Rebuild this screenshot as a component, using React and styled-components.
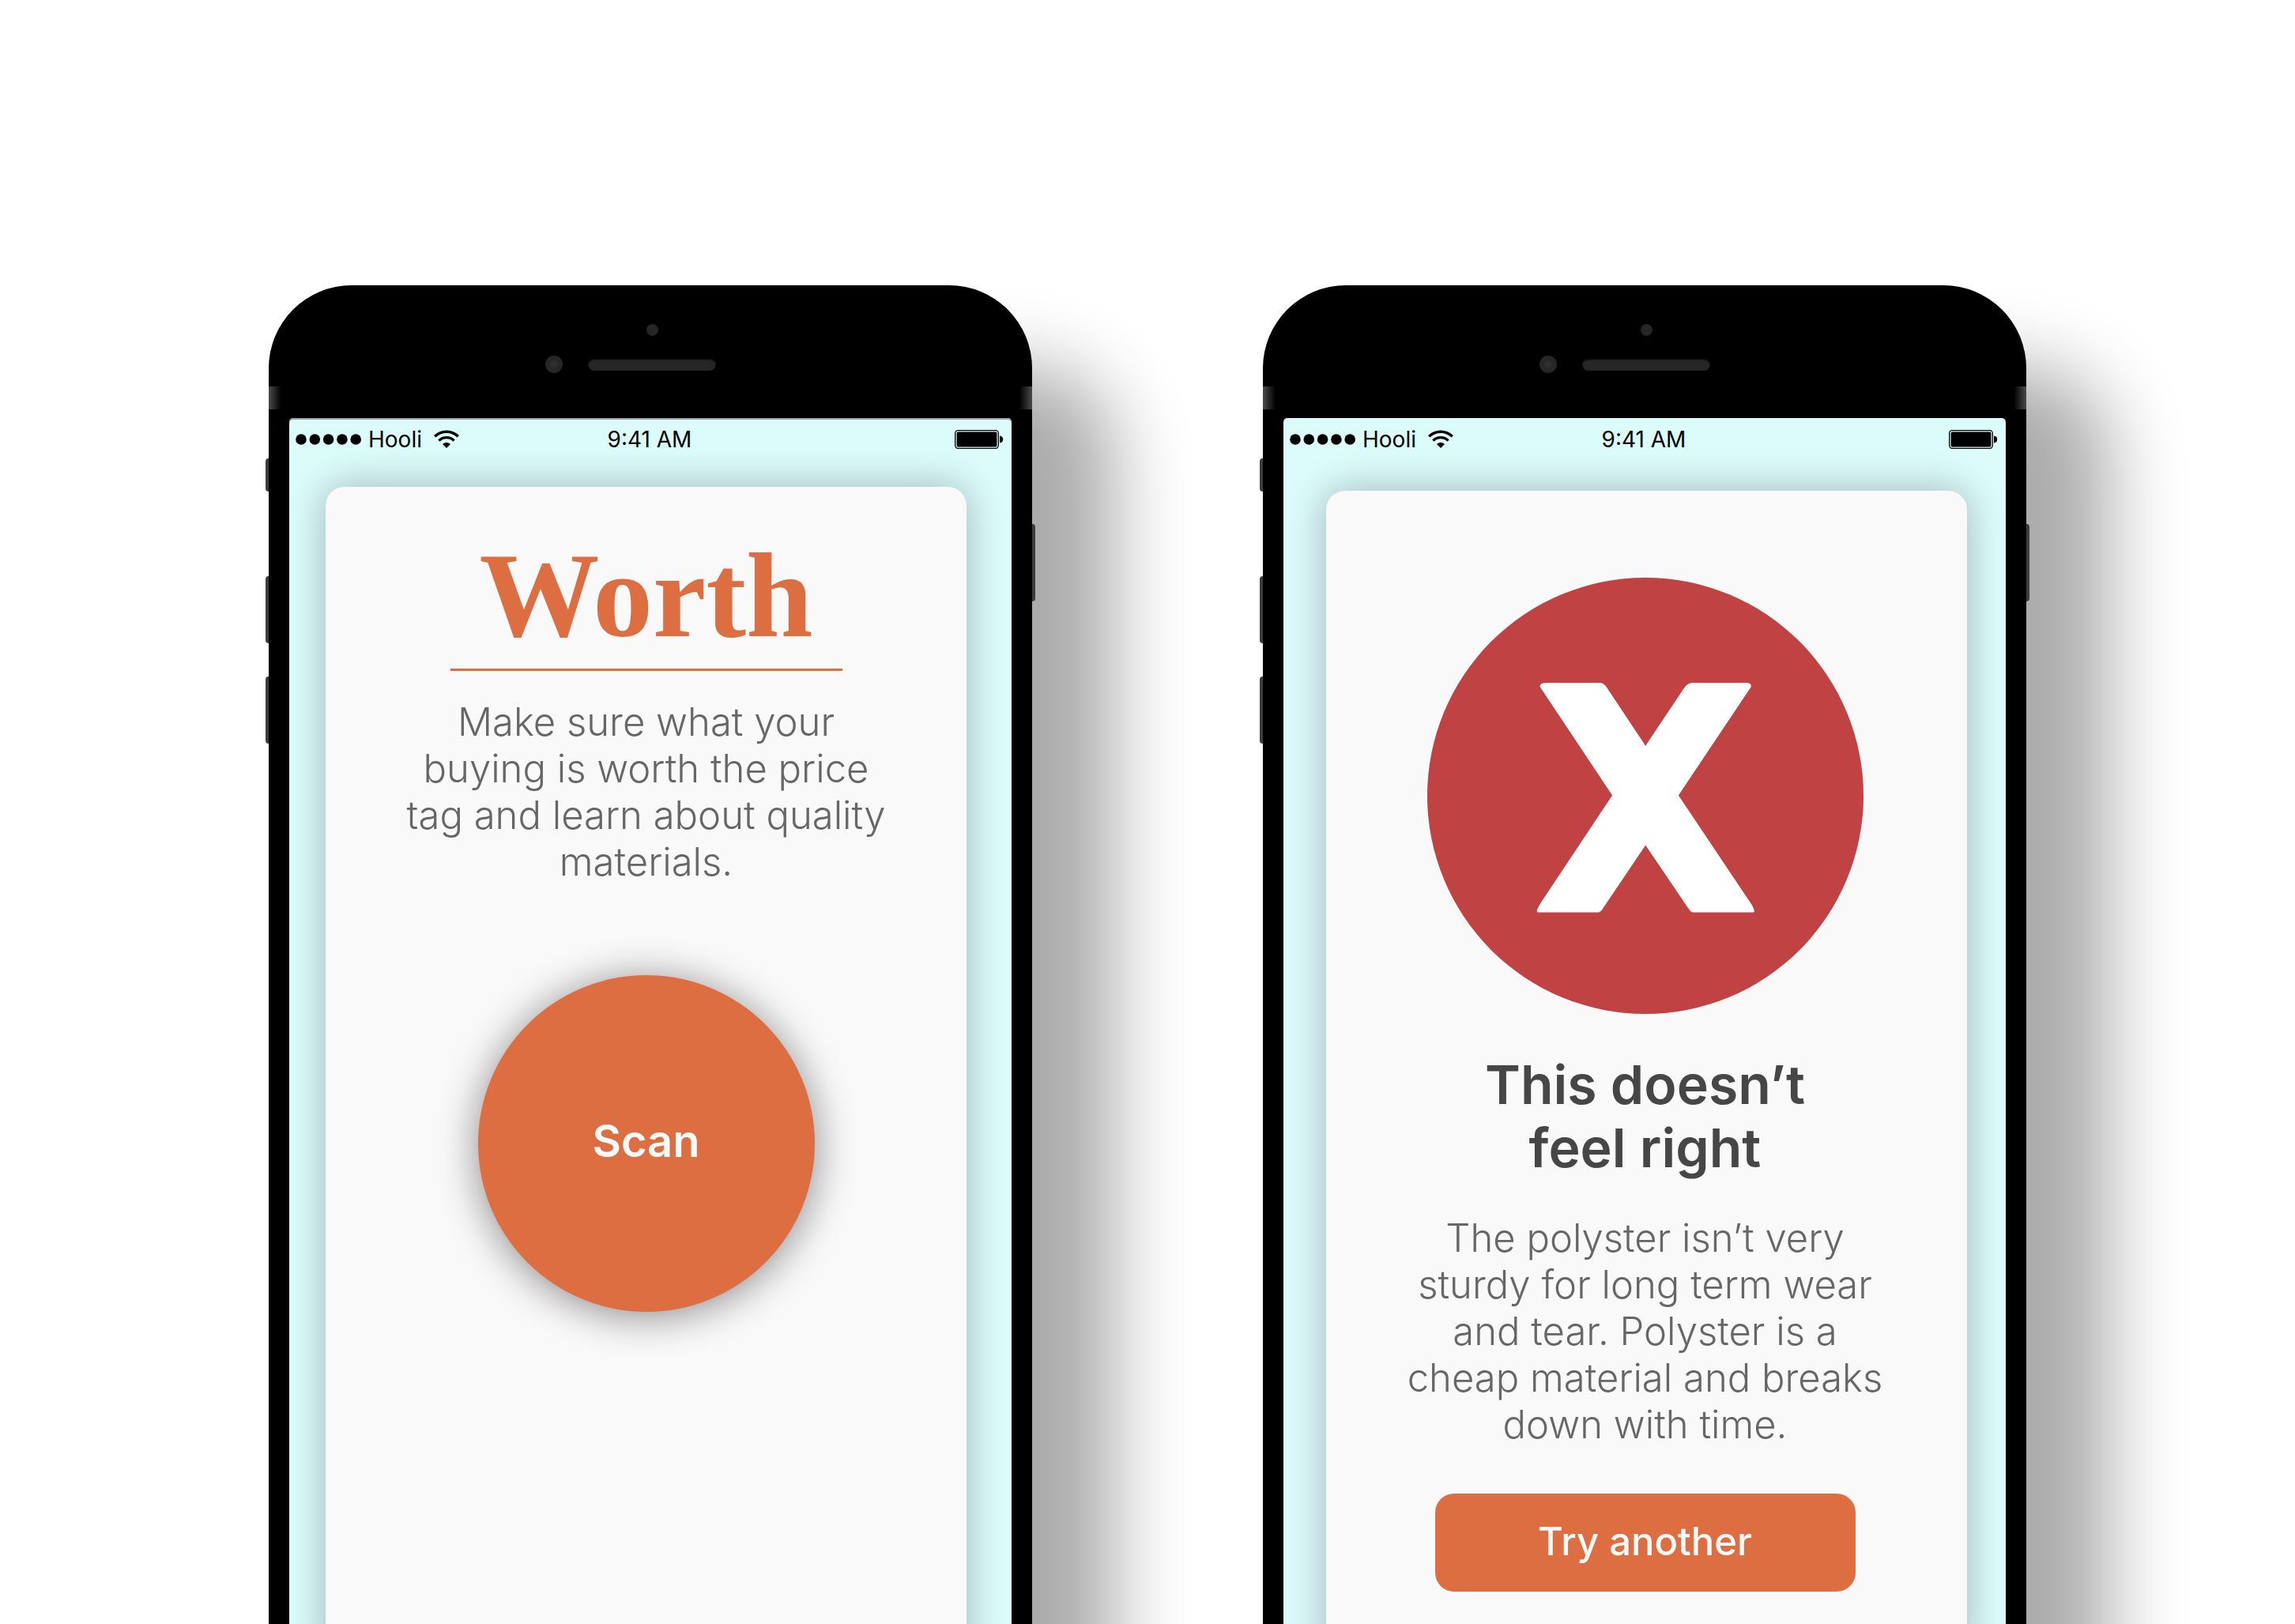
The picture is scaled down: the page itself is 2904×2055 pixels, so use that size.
import React from "react";
import styled, { createGlobalStyle, css } from "styled-components";

const color = {
  sky: "#dcfbfb",
  card: "#f9f9f9",
  accent: "#dc6e42",
  danger: "#c14242",
  heading: "#464646",
  body: "#666666",
  key: "#3c3c3c",
  lens: "#262626",
};

const Global = createGlobalStyle`
  *, *::before, *::after { box-sizing: border-box; }
  body {
    margin: 0;
    background: #fff;
    font-family: Inter, "Liberation Sans", sans-serif;
  }
  h1, h2, p { margin: 0; }
  button { border: 0; padding: 0; font-family: inherit; cursor: pointer; }
`;

const Stage = styled.main`
  display: flex;
  justify-content: center;
  align-items: flex-start;
  gap: 292px;
  height: 100vh;
  padding-top: 361px;
  overflow: hidden;
`;

const Phone = styled.section`
  position: relative;
  display: flex;
  flex-direction: column;
  flex: 0 1 966px;
  min-height: 1960px;
  padding: 0 26px 168px;
  border-radius: 105px;
  background: #000;
  box-shadow: 104px 104px 96px rgba(0, 0, 0, 0.33);
`;

const SideKey = styled.span`
  position: absolute;
  top: ${(p) => p.$top}px;
  width: 4px;
  height: ${(p) => p.$height}px;
  background: ${color.key};
  ${(p) =>
    p.$side === "left"
      ? css`
          right: 100%;
          border-radius: 4px 0 0 4px;
        `
      : css`
          left: 100%;
          border-radius: 0 4px 4px 0;
        `}
`;

const AntennaBand = styled.span`
  position: absolute;
  top: 128px;
  ${(p) => p.$side}: 0;
  width: 16px;
  height: 29px;
  background: linear-gradient(to ${(p) => p.$side}, #000, #4c4a4b);
`;

const Forehead = styled.header`
  display: flex;
  flex-direction: column;
  align-items: center;
  gap: 25px;
  height: 168px;
  padding: 49px 0 0 4px;
`;

const Sensor = styled.span`
  width: 15px;
  height: 15px;
  border-radius: 50%;
  background: ${color.lens};
`;

const EarpieceRow = styled.div`
  display: grid;
  grid-template-columns: 1fr auto 1fr;
  align-items: center;
  gap: 32px;
  width: 100%;
`;

const Camera = styled.span`
  justify-self: end;
  width: 22px;
  height: 22px;
  border-radius: 50%;
  background: radial-gradient(circle, #343434 0, ${color.lens} 40%);
`;

const Speaker = styled.span`
  width: 162px;
  height: 16px;
  border-radius: 8px;
  background: ${color.lens};
  box-shadow: inset 0 2px 2px #000;
`;

const Screen = styled.div`
  display: flex;
  flex-direction: column;
  flex: 1;
  overflow: hidden;
  border-radius: 5px;
  background: ${color.sky};
  box-shadow: ${(p) => (p.$edge ? "inset 0 2px #9aa3a1" : "none")};
`;

const StatusBar = styled.div`
  display: grid;
  grid-template-columns: 1fr auto 1fr;
  align-items: center;
  height: 53px;
  padding: 0 10px 0 8px;
  font-size: 28px;
  line-height: 34px;
  color: #000;
`;

const Carrier = styled.div`
  display: flex;
  align-items: center;
`;

const SignalDots = styled.svg`
  width: 84px;
  height: 14px;
  margin-right: 8px;
`;

const WifiIcon = styled.svg`
  width: 32px;
  height: 24px;
  margin-left: 15px;
`;

const BatteryIcon = styled.svg`
  justify-self: end;
  width: 62px;
  height: 24px;
`;

const Card = styled.article`
  display: flex;
  flex-direction: column;
  align-items: center;
  flex: 1;
  margin: ${(p) => p.$margin};
  padding: ${(p) => p.$padding};
  border-radius: 24px;
  background: ${color.card};
  box-shadow: 0 0 50px rgba(0, 0, 0, 0.28);
  text-align: center;
`;

const Wordmark = styled.h1`
  font: bold 152px/152px "Liberation Serif", serif;
  color: ${color.accent};
`;

const Rule = styled.hr`
  width: 496px;
  height: 3px;
  margin: 16px 0 0;
  border: 0;
  background: ${color.accent};
`;

const Verdict = styled.h2`
  margin-top: 49px;
  font-size: 68px;
  font-weight: 600;
  line-height: 80px;
  white-space: pre-line;
  color: ${color.heading};
`;

const Copy = styled.p`
  margin-top: ${(p) => p.$gap}px;
  font-size: 49px;
  font-weight: 300;
  line-height: 59px;
  white-space: pre-line;
  color: ${color.body};
`;

const ScanButton = styled.button`
  width: 426px;
  height: 426px;
  margin-top: 114px;
  padding-bottom: 6px;
  border-radius: 50%;
  background: ${color.accent};
  box-shadow: 0 5px 50px rgba(20, 10, 15, 0.48);
  color: ${color.card};
  font-size: 56px;
  font-weight: 600;
`;

const RetryButton = styled.button`
  width: 532px;
  height: 124px;
  margin-top: 58px;
  padding-bottom: 4px;
  border-radius: 24px;
  background: ${color.accent};
  color: ${color.card};
  font-size: 49px;
  font-weight: 500;
`;

const VerdictIcon = styled.svg`
  width: 552px;
  height: 552px;
`;

function Status() {
  return (
    <StatusBar>
      <Carrier>
        <SignalDots viewBox="0 0 84 14" aria-hidden="true">
          {[7, 24.3, 41.6, 58.9, 76.2].map((x) => (
            <circle key={x} cx={x} cy="7" r="6.8" />
          ))}
        </SignalDots>
        <span>Hooli</span>
        <WifiIcon viewBox="0 0 32 24" aria-hidden="true">
          <path
            d="M1.2 8.3a21 21 0 0 1 29.6 0M6.4 13.6a13.6 13.6 0 0 1 19.2 0"
            fill="none"
            stroke="#000"
            strokeWidth="3.4"
          />
          <path d="M16 23l-5-5a7.2 7.2 0 0 1 10 0z" />
        </WifiIcon>
      </Carrier>
      <span>9:41 AM</span>
      <BatteryIcon viewBox="0 0 62 24" aria-hidden="true">
        <rect x="0.7" y="0.7" width="54.6" height="22.6" rx="3.5" fill="none" stroke="#000" strokeWidth="1.3" />
        <rect x="2.6" y="2.6" width="50.8" height="18.8" rx="1.5" />
        <path d="M57 7.5c3 .3 4.2 2 4.2 4.5s-1.2 4.2-4.2 4.5z" />
      </BatteryIcon>
    </StatusBar>
  );
}

function Device({ edge, children }) {
  return (
    <Phone>
      <SideKey $side="left" $top={219} $height={42} />
      <SideKey $side="left" $top={368} $height={85} />
      <SideKey $side="left" $top={495} $height={85} />
      <SideKey $side="right" $top={302} $height={98} />
      <AntennaBand $side="left" />
      <AntennaBand $side="right" />
      <Forehead>
        <Sensor />
        <EarpieceRow>
          <Camera />
          <Speaker />
        </EarpieceRow>
      </Forehead>
      <Screen $edge={edge}>
        <Status />
        {children}
      </Screen>
    </Phone>
  );
}

export default function App() {
  return (
    <>
      <Global />
      <Stage>
        <Device edge>
          <Card $margin="34px 57px 46px 46px" $padding="62px 0 0">
            <Wordmark>Worth</Wordmark>
            <Rule />
            <Copy $gap={35}>
              {"Make sure what your\nbuying is worth the price\ntag and learn about quality\nmaterials."}
            </Copy>
            <ScanButton type="button">Scan</ScanButton>
          </Card>
        </Device>
        <Device>
          <Card $margin="39px 49px 46px 54px" $padding="110px 4px 0 0">
            <VerdictIcon viewBox="68 53 1443 1443" role="img" aria-label="Not worth it">
              <circle cx="789.5" cy="774.5" r="721.5" fill={color.danger} />
              <path
                fill="#fff"
                d="M442 416Q436 403 460 401H634Q651 400 661 415L790 609L917 419Q929 401 946 401H1122Q1144 401 1138 416L899 773L1142 1136Q1149 1147 1150 1157Q1150 1160 1146 1160H948Q940 1160 933 1149L790 938L649 1147Q642 1160 632 1160H434Q430 1159 431 1152Q436 1140 446 1125L680 773Z"
              />
            </VerdictIcon>
            <Verdict>{"This doesn’t\nfeel right"}</Verdict>
            <Copy $gap={45}>
              {"The polyster isn’t very\nsturdy for long term wear\nand tear. Polyster is a\ncheap material and breaks\ndown with time."}
            </Copy>
            <RetryButton type="button">Try another</RetryButton>
          </Card>
        </Device>
      </Stage>
    </>
  );
}
